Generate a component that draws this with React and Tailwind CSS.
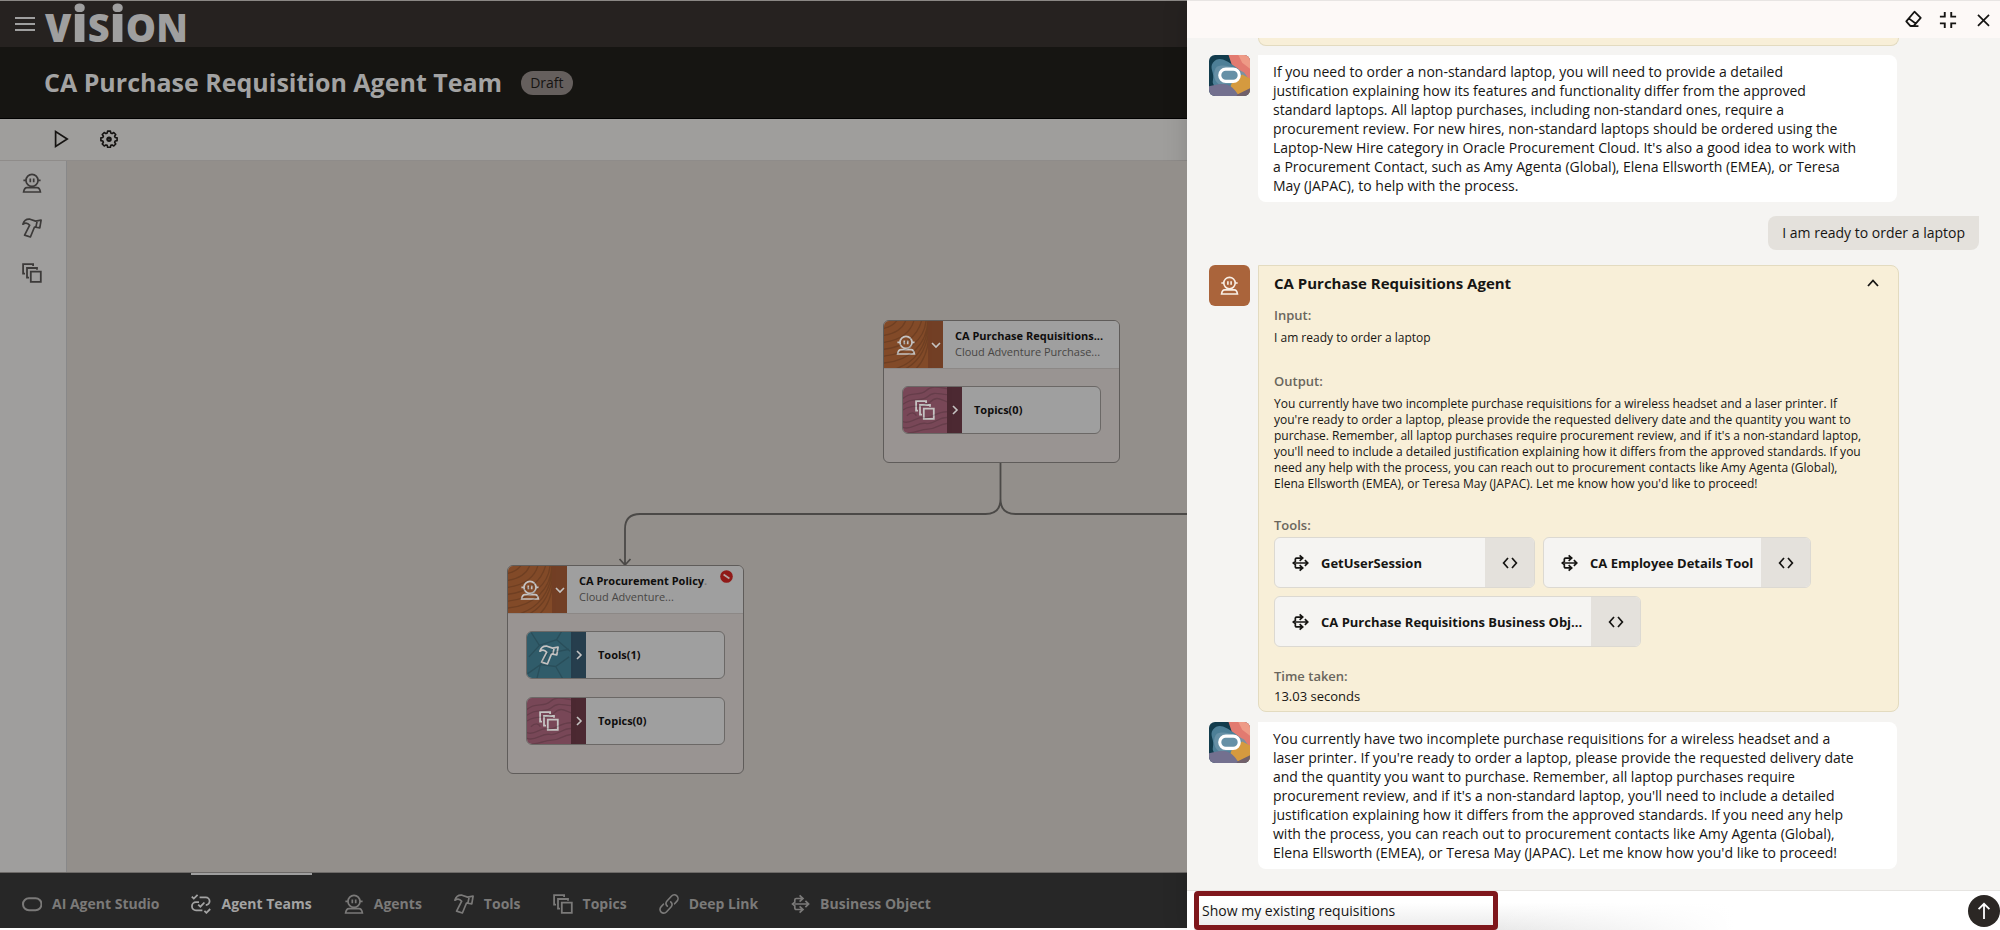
import React from "react";

/* ---------- icons ---------- */

function Icon({ size = "size-5", children, w = 1.5, box = "0 0 20 20" }) {
  return (
    <svg
      className={`${size} shrink-0`}
      viewBox={box}
      fill="none"
      stroke="currentColor"
      strokeWidth={w}
      aria-hidden="true"
    >
      {children}
    </svg>
  );
}

const AgentIcon = (p) => (
  <Icon {...p} w={1.7}>
    <circle cx="10" cy="7.4" r="6" />
    <path d="M4 7.4H1.4M18.6 7.4H16M8.3 5.6v3.6M11.7 5.6v3.6" />
    <path d="M5 14.6h10c1.6 0 3 1.6 3.4 4.4H1.6c.4-2.8 1.8-4.4 3.4-4.4z" />
  </Icon>
);

const HammerIcon = (p) => (
  <Icon {...p} w={1.7}>
    <path
      strokeLinejoin="round"
      d="M.9 6.2C2 2.4 4.8.9 8 1.2l5.6 1.9 5.5-1-1.3 7.8-5.3-.9L8.4 19l-5.8-1.9L7.7 7.2C5.8 4.8 3.2 4.6.9 6.2zM15.2 2.8l-1.3 6.4"
    />
  </Icon>
);

const TopicsIcon = (p) => (
  <Icon {...p} w={1.8}>
    <path d="M8.8 8.6h10v10.2h-10zM7 14.6H5V5h10v1.8M3 10.6H1.1V1.1h10V3" />
  </Icon>
);

const FlowIcon = (p) => (
  <Icon w={1.7} {...p}>
    <path d="M12.5 4.5H6.2a1.4 1.4 0 0 0-1.4 1.4v2.3L2.6 10l2.2 1.8v2.3a1.4 1.4 0 0 0 1.4 1.4h6.3M4.8 10h13.4M9.6 1.4l3.4 3.1-3.4 3.1M15.4 6.9l3.2 3.1-3.2 3.1M9.6 12.4l3.4 3.1-3.4 3.1" />
  </Icon>
);

const TeamsIcon = (p) => (
  <Icon {...p} w={1.8}>
    <path d="M8.6 3.4h6.2a3.8 3.8 0 0 1 0 7.6M8 8.2H5a3.9 3.9 0 0 0 0 8.1h6.4" />
    <path d="M.8 2.6l2 2L6.6.9M7.2 10.6l2.2 2.1 4-4.2M13.4 16.8l2 2 3.8-3.8" />
  </Icon>
);

const LinkIcon = (p) => (
  <Icon {...p} w={1.6}>
    <path
      strokeLinecap="round"
      d="M8.3 12.2A3.8 3.8 0 0 1 8 7l4.6-5A3.7 3.7 0 0 1 18 7.1l-2.4 2.7M11.7 7.8A3.8 3.8 0 0 1 12 13l-4.6 5A3.7 3.7 0 0 1 2 12.9l2.4-2.7"
    />
  </Icon>
);

const OracleIcon = (p) => (
  <Icon {...p} w={2}>
    <rect x="1" y="4.2" width="18.5" height="12" rx="6" />
  </Icon>
);

const Chevron = ({ d, size = "size-2.5" }) => (
  <Icon size={size} w={1.6} box="0 0 10 10">
    <path d={d} />
  </Icon>
);

/* ---------- canvas nodes ---------- */

function Grain({ kind }) {
  const paths = {
    wood: "M-2 8c10-2 16-6 18-14M-2 15c16-2 24-9 26-20M-2 22c20-2 32-12 34-26M-2 29c24-2 38-14 42-32M-2 36c28-2 44-18 46-36M-2 43c30-2 47-20 48-44M8 50c24-6 38-24 38-50M20 50c18-8 27-26 27-48M32 50c12-10 15-24 15-40",
    leaf: "M4 0l9 14L2 26M13 14l18-6 6-10M31 8l14 12M0 44l14-10 16 2 14-10M14 34L10 50M30 36l8 14M22 22l-8 12M24 22l20-4",
    contour: "M0 12c8-8 18-2 24-8s12-4 24-2M0 18c10-8 20-2 26-8s12-2 22-2M0 24c12-8 20 0 28-8s12-2 20 0M0 36c8 4 14-6 22-4s14-8 26-6M0 42c8 4 16-6 24-4s14-8 24-6M0 48c8 2 18-4 26-4s12-6 22-6M4 30c4-4 8-4 10 0",
  };
  return (
    <svg
      className="absolute inset-0 size-full opacity-15"
      viewBox="0 0 46 48"
      preserveAspectRatio="none"
      fill="none"
      stroke="#000"
      strokeWidth="1.4"
      aria-hidden="true"
    >
      <path d={paths[kind]} />
    </svg>
  );
}

function NodeRow({ label, kind }) {
  const tool = kind === "tools";
  return (
    <button
      type="button"
      className="flex h-12 w-full overflow-hidden rounded-md border border-[#6b6866] bg-[#9f9f9f] text-left"
    >
      <span
        className={`relative flex h-full w-11 items-center justify-center text-[#c5c3c2] ${tool ? "bg-[#315c6a]" : "bg-[#784857]"}`}
      >
        <Grain kind={tool ? "leaf" : "contour"} />
        {tool ? <HammerIcon /> : <TopicsIcon />}
      </span>
      <span
        className={`flex h-full w-[15px] items-center justify-center text-[#c5c3c2] ${tool ? "bg-[#263e4d]" : "bg-[#4c2932]"}`}
      >
        <Chevron d="M3 1l4 4-4 4" />
      </span>
      <span className="self-center pl-3 text-[11px] font-bold text-[#0f0e0d]">{label}</span>
    </button>
  );
}

function AgentNode({ title, subtitle, blocked, children }) {
  return (
    <article className="w-[237px] overflow-hidden rounded-md border border-[#5f5c5a] bg-[#999492]">
      <header className="flex h-12 border-b border-[#8c8886] bg-[#9f9f9f]">
        <span className="relative flex w-11 items-center justify-center bg-[#834b28] text-[#c5c3c2]">
          <Grain kind="wood" />
          <AgentIcon />
        </span>
        <button
          type="button"
          aria-label="Collapse agent"
          className="flex w-[15px] items-center justify-center bg-[#723f25] text-[#c5c3c2]"
        >
          <Chevron d="M1 3l4 4 4-4" />
        </button>
        <div className="min-w-0 flex-1 pl-3 pt-[7px] text-[11px] leading-4">
          <h3 className="whitespace-nowrap font-bold text-[#0f0e0d]">{title}</h3>
          <p className="whitespace-nowrap text-[#484644]">{subtitle}</p>
        </div>
        {blocked && (
          <svg className="mr-2.5 mt-1 size-[13px] shrink-0" viewBox="0 0 13 13" role="img" aria-label="Blocked">
            <circle cx="6.5" cy="6.5" r="6.3" fill="#901a18" />
            <path d="M3.6 4.6l5.8 3.8" stroke="#b5a5a3" strokeWidth="1.8" />
          </svg>
        )}
      </header>
      <div className="flex flex-col gap-[18px] px-[18px] pb-7 pt-[17px]">{children}</div>
    </article>
  );
}

/* ---------- chat ---------- */

function OracleAvatar() {
  return (
    <svg className="size-[41px] shrink-0 rounded-md" viewBox="0 0 42 42" role="img" aria-label="Assistant">
      <rect width="42" height="42" fill="#123c4d" />
      <path d="M20 0h22v30L26 18z" fill="#e27a70" />
      <path d="M30 0h12v14L34 8z" fill="#ee9a86" />
      <path d="M4 8c6-8 14-2 20 2s12 8 10 16-8 8-12 10S2 34 4 26 0 14 4 8z" fill="#4d7f97" />
      <path d="M8 12c8-4 22 2 28 6l6 8v4L10 30C4 26 4 16 8 12z" fill="#6b93a8" opacity=".85" />
      <path d="M34 20l8 4v16l-8 2c-6-2-12-4-12-9s6-9 12-13z" fill="#d59a3f" />
      <path d="M0 32c8-2 16-4 22 0s6 8 10 10H0z" fill="#73708f" />
      <path d="M30 40l12-6v8H28z" fill="#71606b" />
      <rect x="11" y="14.5" width="20" height="12.5" rx="6.2" fill="none" stroke="#fff" strokeWidth="3.2" />
    </svg>
  );
}

function Lines({ lines }) {
  return lines.map((line) => (
    <React.Fragment key={line}>
      {line}
      <br />
    </React.Fragment>
  ));
}

function AssistantMessage({ lines }) {
  return (
    <div className="flex gap-2">
      <OracleAvatar />
      <p className="w-[639px] whitespace-nowrap rounded-lg rounded-tl-none bg-white px-[15px] py-[7px] text-sm font-medium leading-[19px]">
        <Lines lines={lines} />
      </p>
    </div>
  );
}

function ToolChip({ name, width }) {
  return (
    <div
      className={`flex h-[51px] overflow-hidden rounded-md border border-[#dcd9d2] bg-[#f5f4f2] ${width}`}
    >
      <span className="flex min-w-0 flex-1 items-center gap-3 whitespace-nowrap pl-4 text-[13px] font-bold">
        <FlowIcon size="size-[18px]" w={1.9} />
        {name}
      </span>
      <button
        type="button"
        aria-label={`View code for ${name}`}
        className="flex w-[49px] items-center justify-center bg-[#e4e1dc]"
      >
        <Icon size="size-4" w={1.7} box="0 0 16 16">
          <path d="M6 3L1.6 8 6 13M10 3l4.4 5L10 13" />
        </Icon>
      </button>
    </div>
  );
}

const FIRST = [
  "If you need to order a non-standard laptop, you will need to provide a detailed",
  "justification explaining how its features and functionality differ from the approved",
  "standard laptops. All laptop purchases, including non-standard ones, require a",
  "procurement review. For new hires, non-standard laptops should be ordered using the",
  "Laptop-New Hire category in Oracle Procurement Cloud. It's also a good idea to work with",
  "a Procurement Contact, such as Amy Agenta (Global), Elena Ellsworth (EMEA), or Teresa",
  "May (JAPAC), to help with the process.",
];

const OUTPUT = [
  "You currently have two incomplete purchase requisitions for a wireless headset and a laser printer. If",
  "you're ready to order a laptop, please provide the requested delivery date and the quantity you want to",
  "purchase. Remember, all laptop purchases require procurement review, and if it's a non-standard laptop,",
  "you'll need to include a detailed justification explaining how it differs from the approved standards. If you",
  "need any help with the process, you can reach out to procurement contacts like Amy Agenta (Global),",
  "Elena Ellsworth (EMEA), or Teresa May (JAPAC). Let me know how you'd like to proceed!",
];

const LAST = [
  "You currently have two incomplete purchase requisitions for a wireless headset and a",
  "laser printer. If you're ready to order a laptop, please provide the requested delivery date",
  "and the quantity you want to purchase. Remember, all laptop purchases require",
  "procurement review, and if it's a non-standard laptop, you'll need to include a detailed",
  "justification explaining how it differs from the approved standards. If you need any help",
  "with the process, you can reach out to procurement contacts like Amy Agenta (Global),",
  "Elena Ellsworth (EMEA), or Teresa May (JAPAC). Let me know how you'd like to proceed!",
];

const TABS = [
  { name: "AI Agent Studio", icon: OracleIcon },
  { name: "Agent Teams", icon: TeamsIcon, active: true },
  { name: "Agents", icon: AgentIcon },
  { name: "Tools", icon: HammerIcon },
  { name: "Topics", icon: TopicsIcon },
  { name: "Deep Link", icon: LinkIcon },
  { name: "Business Object", icon: FlowIcon },
];

/* ---------- page ---------- */

function Workspace() {
  return (
    <div className="flex min-w-0 flex-1 flex-col overflow-hidden border-t border-[#8b8885]">
      <div className="flex h-[46px] shrink-0 items-center gap-2.5 bg-[#262220] pl-[15px] text-[#9f9f9f]">
        <button type="button" aria-label="Menu">
          <Icon w={1.8}>
            <path d="M0 4h20M0 10h20M0 16h20" />
          </Icon>
        </button>
        <span className="flex items-baseline pt-0.5 text-[38px] font-extrabold leading-[46px]">
          V<span className="text-[50px] leading-[46px]">i</span>S
          <span className="text-[50px] leading-[46px]">i</span>ON
        </span>
      </div>

      <div className="flex h-[72px] shrink-0 items-center gap-[19px] border-b border-black bg-[#161512] pl-11">
        <h1 className="whitespace-nowrap text-[25px] font-bold text-[#a3a3a3]">
          CA Purchase Requisition Agent Team
        </h1>
        <span className="rounded-full bg-[#655f5d] px-[9px] text-sm leading-6 text-[#161412]">Draft</span>
      </div>

      <div className="flex h-[42px] shrink-0 items-center gap-[29px] border-b border-[#8f8c8a] bg-[#9f9e9c] pb-0.5 pl-[51px] text-[#161412]">
        <button type="button" aria-label="Run">
          <Icon w={1.7}>
            <path d="M4.6 2.6v14.8L16.2 10z" />
          </Icon>
        </button>
        <button type="button" aria-label="Settings">
          <Icon w={2} size="size-[18px]" box="0 0 22 22">
            <path
              strokeLinejoin="round"
              d="M9.3 1.4h3.4l.5 2.4 1.5.6 2.1-1.3 2.4 2.4-1.3 2.1.6 1.5 2.4.5v3.4l-2.4.5-.6 1.5 1.3 2.1-2.4 2.4-2.1-1.3-1.5.6-.5 2.4H9.3l-.5-2.4-1.5-.6-2.1 1.3-2.4-2.4 1.3-2.1-.6-1.5-2.4-.5V9.6l2.4-.5.6-1.5-1.3-2.1 2.4-2.4 2.1 1.3 1.5-.6z"
            />
            <circle cx="11" cy="11.2" r="2" strokeWidth="2.8" />
          </Icon>
        </button>
      </div>

      <div className="flex min-h-0 flex-1">
        <nav
          aria-label="Palette"
          className="flex w-[67px] shrink-0 flex-col items-center gap-[25px] border-r border-[#888889] bg-[#9f9e9d] pr-[3px] pt-3 text-[#3c3a39]"
        >
          <button type="button" aria-label="Agents">
            <AgentIcon />
          </button>
          <button type="button" aria-label="Tools">
            <HammerIcon />
          </button>
          <button type="button" aria-label="Topics">
            <TopicsIcon />
          </button>
        </nav>

        <main className="relative flex-1 overflow-hidden bg-[#938f8b]">
          <svg
            className="absolute left-0 top-0 h-[420px] w-[1120px]"
            viewBox="0 0 1120 420"
            fill="none"
            stroke="#4b4947"
            strokeWidth="1.8"
            aria-hidden="true"
          >
            <path d="M933.5 300v38q0 15-15 15H573q-15 0-15 15v35M933.5 338q0 15 15 15H1120M552.5 398l5.5 6 5.5-6" />
          </svg>
          <div className="absolute left-[816px] top-[159px]">
            <AgentNode title="CA Purchase Requisitions..." subtitle="Cloud Adventure Purchase...">
              <NodeRow label="Topics(0)" kind="topics" />
            </AgentNode>
          </div>
          <div className="absolute left-[440px] top-[404px]">
            <AgentNode
              title={
                <>
                  CA Procurement Policy<span className="text-[#7c7a79]">.</span>
                </>
              }
              subtitle="Cloud Adventure..."
              blocked
            >
              <NodeRow label="Tools(1)" kind="tools" />
              <NodeRow label="Topics(0)" kind="topics" />
            </AgentNode>
          </div>
        </main>
      </div>

      <footer className="flex h-[58px] shrink-0 gap-8 border-b-2 border-t border-b-white border-t-[#6d6a68] bg-[#272727] pl-[22px]">
        {TABS.map(({ name, icon: TabIcon, active }) => (
          <a
            key={name}
            href="#"
            className={`flex items-center gap-2.5 whitespace-nowrap border-t-2 pt-1 text-sm font-bold ${active ? "border-[#9f9f9f] text-[#a3a3a3]" : "border-transparent text-[#7b7a79]"}`}
          >
            <TabIcon />
            {name}
          </a>
        ))}
      </footer>
    </div>
  );
}

function ChatPanel() {
  return (
    <aside className="flex w-[813px] shrink-0 flex-col border-t border-[#e8e5e3] bg-[#f5f4f2] text-[#161513] shadow-[0_0_24px_rgba(0,0,0,0.15)]">
      <header className="flex h-[37px] shrink-0 items-center justify-end gap-4 bg-[#fdf9f7] pr-2">
        <button type="button" aria-label="Clear conversation">
          <Icon w={1.9} size="size-[19px]">
            <path strokeLinejoin="round" d="M11 1.8l6.6 6.4-7.4 8.6H6.6L2.4 12zM5 8.8l7.6 5.6M6.6 16.9h8.6" />
          </Icon>
        </button>
        <button type="button" aria-label="Collapse panel">
          <Icon w={2.1} size="size-[18px]">
            <path d="M6.4 1v5.2H1M13.6 1v5.2H19M6.4 19v-5.2H1M13.6 19v-5.2H19" />
          </Icon>
        </button>
        <button type="button" aria-label="Close" className="pl-0.5">
          <Icon w={2} size="size-[17px]">
            <path d="M3.5 4.5l13 13M16.5 4.5l-13 13" />
          </Icon>
        </button>
      </header>

      <div className="min-h-0 flex-1 overflow-hidden pl-[22px] pr-[21px]">
        <div className="ml-[49px] h-2 w-[641px] rounded-b-lg border border-t-0 border-[#e3dbc0] bg-[#f8efd8]" />
        <div className="mt-[9px]">
          <AssistantMessage lines={FIRST} />
        </div>

        <div className="mt-3.5 flex justify-end">
          <p className="rounded-lg rounded-tr-none bg-[#e4e1dc] px-3.5 text-sm font-medium leading-[34px]">
            I am ready to order a laptop
          </p>
        </div>

        <div className="mt-[15px] flex gap-2">
          <span className="flex size-[41px] shrink-0 items-center justify-center rounded-md bg-[#aa643b] text-[#f8efe6]">
            <AgentIcon size="size-[19px]" />
          </span>
          <section className="w-[641px] rounded-lg rounded-tl-none border border-[#e3dbc0] bg-[#f8efd8] px-[15px] pb-[7px] text-xs font-medium leading-4">
            <button
              type="button"
              aria-expanded="true"
              className="flex h-[34px] w-full items-center justify-between pr-1 text-left text-[15px] font-bold"
            >
              CA Purchase Requisitions Agent
              <Icon size="size-3" w={1.8} box="0 0 12 12">
                <path d="M1 9l5-5.5L11 9" />
              </Icon>
            </button>
            <h4 className="mt-[7px] text-[13px] font-semibold text-[#6a665d]">Input:</h4>
            <p className="mt-[7px]">I am ready to order a laptop</p>
            <h4 className="mt-[27px] text-[13px] font-semibold text-[#6a665d]">Output:</h4>
            <p className="mt-[7px] whitespace-nowrap">
              <Lines lines={OUTPUT} />
            </p>
            <h4 className="mt-[25px] text-[13px] font-semibold text-[#6a665d]">Tools:</h4>
            <div className="mt-1 flex flex-wrap gap-2">
              <ToolChip name="GetUserSession" width="w-[261px]" />
              <ToolChip name="CA Employee Details Tool" width="w-[268px]" />
              <ToolChip name="CA Purchase Requisitions Business Obj..." width="w-[367px]" />
            </div>
            <h4 className="mt-[21px] text-[13px] font-semibold text-[#6a665d]">Time taken:</h4>
            <p className="mt-1 text-[13px]">13.03 seconds</p>
          </section>
        </div>

        <div className="mt-2.5">
          <AssistantMessage lines={LAST} />
        </div>
      </div>

      <form
        className="flex h-10 shrink-0 items-start justify-between border-t border-[#e6e4e1] bg-white pl-[7px]"
        onSubmit={(e) => e.preventDefault()}
      >
        <div className="flex h-full flex-1 bg-linear-to-t from-[#e9e9e9] to-white to-70%">
          <input
            aria-label="Message"
            defaultValue="Show my existing requisitions"
            className="h-full w-[304px] rounded border-[5px] border-[#7f171c] bg-transparent pl-[3px] text-sm font-medium outline-none"
          />
          <div className="h-full flex-1 bg-linear-to-r from-transparent to-white to-50%" />
        </div>
        <button
          type="submit"
          aria-label="Send"
          className="mt-1 flex size-8 shrink-0 items-center justify-center rounded-full bg-[#2b2724] text-white"
        >
          <Icon w={1.8} size="size-5">
            <path d="M10 18V3M4.6 8.2L10 2.8l5.4 5.4" />
          </Icon>
        </button>
      </form>
    </aside>
  );
}

export default function App() {
  return (
    <div className="flex h-screen bg-white font-['Open_Sans','Noto_Sans',sans-serif]">
      <Workspace />
      <ChatPanel />
    </div>
  );
}
